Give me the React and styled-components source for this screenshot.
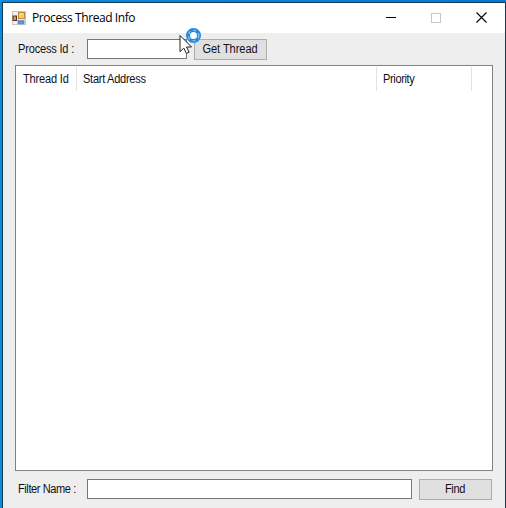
import React from "react";
import styled, { createGlobalStyle } from "styled-components";

const GlobalStyle = createGlobalStyle`
  * { box-sizing: border-box; }
  body { margin: 0; overflow: hidden; }
`;

const Desktop = styled.div`
  position: relative;
  width: 506px;
  height: 508px;
  padding: 2px 0 0 2px;
  background: linear-gradient(90deg, #0a8cdc, #0878d2);
  overflow: hidden;
`;

const Window = styled.div`
  display: flex;
  flex-direction: column;
  width: 504px;
  height: 506px;
  border: solid #173a56;
  border-width: 1px 1px 0 1px;
  background: #eeeeee;
  font-family: "Liberation Sans", Arial, sans-serif;
  font-size: 12px;
  color: #101016;
`;

const TitleBar = styled.header`
  display: flex;
  align-items: center;
  flex: 0 0 30px;
  padding-left: 9px;
  background: #fff;
`;

const Title = styled.h1`
  flex: 1;
  margin: 0 0 0 6px;
  font: 400 12px/16px "Open Sans", "Noto Sans", sans-serif;
  letter-spacing: -0.42px;
  color: #000;
`;

const Caption = styled.div`
  display: flex;
  width: 45.5px;
  justify-content: center;
`;

const Text = styled.span`
  display: inline-block;
  line-height: 14px;
  white-space: pre;
  letter-spacing: ${(p) => p.$spacing || 0}px;
  transform: scaleX(0.92);
  transform-origin: ${(p) => p.$origin || "left"} center;
`;

const Row = styled.div`
  display: flex;
  align-items: center;
  flex: 0 0 ${(p) => p.$height}px;
  padding: 0 12px 0 15px;
`;

const Label = styled(Text).attrs({ as: "label" })`
  width: 69px;
`;

const Input = styled.input`
  width: ${(p) => p.$width}px;
  height: 20px;
  margin: 0;
  padding: 0 3px;
  border: 1px solid #777;
  border-radius: 0;
  background: #fff;
  outline: none;
`;

const Button = styled.button`
  display: flex;
  align-items: center;
  justify-content: center;
  width: ${(p) => p.$width}px;
  height: 21px;
  margin: 0 0 0 7px;
  padding: 0 2px 0 0;
  border: 1px solid #adadad;
  border-radius: 0;
  background: #e0e0e0;
  font: inherit;
  color: inherit;
`;

const ListView = styled.section`
  flex: 0 0 406px;
  width: 478px;
  margin-left: 12px;
  border: 1px solid #828282;
  background: #fff;
`;

const ListHeader = styled.div`
  display: grid;
  grid-template-columns: 61px 300px 95px;
  height: 25px;
  padding-top: 1px;
`;

const Column = styled.div`
  display: flex;
  align-items: center;
  padding: 0 0 0 ${(p) => p.$inset}px;
  border-right: 1px solid #e3e3e3;
`;

const Pointer = styled.svg`
  position: absolute;
  left: 176px;
  top: 25px;
`;

function AppIcon() {
  return (
    <svg width="14" height="14" viewBox="0 0 14 14">
      <rect x=".5" y=".5" width="13" height="13" fill="#f1f1f4" stroke="#c6c6cc" />
      <path d="M6.5 1v12M1 9.5h12" stroke="#c9c9d2" />
      <rect x="1" y="5" width="3.5" height="4.5" fill="#c49a70" stroke="#5c3219" />
      <rect x="6.5" y="1.5" width="6" height="6" fill="#fbcb5c" stroke="#b98a3a" />
      <path d="M7.5 3h4" stroke="#ffe08b" />
      <path d="M6 9.8h6v3H6z" fill="#5a9fe0" stroke="#3b74b6" strokeWidth=".7" />
    </svg>
  );
}

export default function App() {
  return (
    <>
      <GlobalStyle />
      <Desktop>
        <Window>
          <TitleBar>
            <AppIcon />
            <Title>Process Thread Info</Title>
            <Caption>
              <svg width="10" height="11" shapeRendering="crispEdges">
                <path d="M0 4.5h10" stroke="#000" />
              </svg>
            </Caption>
            <Caption>
              <svg width="12" height="10">
                <rect x=".5" y=".5" width="9" height="9" fill="none" stroke="#cdc6c0" />
              </svg>
            </Caption>
            <Caption>
              <svg width="12" height="12">
                <path d="M.5.5l10 10M10.5.5l-10 10" stroke="#000" strokeWidth="1.1" />
              </svg>
            </Caption>
          </TitleBar>
          <Row $height={32}>
            <Label $spacing={-0.2}>Process Id :</Label>
            <Input $width={100} />
            <Button $width={73}>
              <Text $spacing={-0.05} $origin="center">Get Thread</Text>
            </Button>
          </Row>
          <ListView>
            <ListHeader>
              <Column $inset={7}><Text $spacing={-0.2}>Thread Id</Text></Column>
              <Column $inset={6}><Text $spacing={-0.3}>Start Address</Text></Column>
              <Column $inset={6}><Text $spacing={-0.4}>Priority</Text></Column>
            </ListHeader>
          </ListView>
          <Row $height={36}>
            <Label $spacing={-0.45}>Filter Name :</Label>
            <Input $width={325} />
            <Button $width={73}>
              <Text $spacing={-0.35} $origin="center">Find</Text>
            </Button>
          </Row>
        </Window>
        <Pointer width="28" height="32" viewBox="0 0 28 32">
          <path
            d="M4 10.5v16.2l3.8-3.6 2.6 5.4 2.7-1.3-2.6-5.2h5z"
            fill="#fff"
            stroke="#222"
            strokeWidth="1"
          />
          <circle cx="17.5" cy="10.5" r="5.5" fill="#fff" stroke="#2489dc" strokeWidth="4" />
          <circle cx="17.5" cy="10.5" r="5.3" fill="none" stroke="#76bdf0" strokeWidth="1.5" strokeDasharray="3 3" />
        </Pointer>
      </Desktop>
    </>
  );
}
